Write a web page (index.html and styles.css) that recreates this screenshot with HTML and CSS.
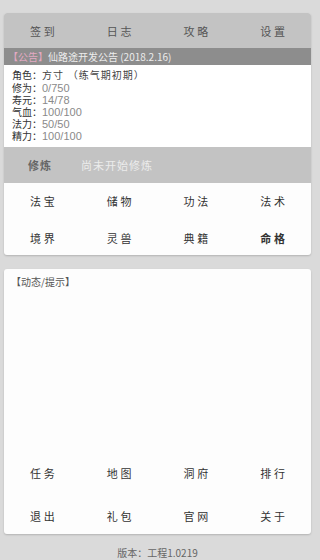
FILE: index.html
```html
<!DOCTYPE html>
<html lang="zh">
<head>
<meta charset="utf-8">
<link rel="stylesheet" href="styles.css">
</head>
<body>
<div class="page">
  <div class="card card-main">
    <div class="tabs">
      <div class="tab">签到</div>
      <div class="tab">日志</div>
      <div class="tab">攻略</div>
      <div class="tab">设置</div>
    </div>
    <div class="notice"><span class="notice-tag">【公告】</span>仙路途开发公告 (2018.2.16)</div>
    <div class="info">
      <div class="line"><span class="label">角色：</span><span class="dark">方寸 （练气期初期）</span></div>
      <div class="line"><span class="label">修为：</span><span class="val">0/750</span></div>
      <div class="line"><span class="label">寿元：</span><span class="val">14/78</span></div>
      <div class="line"><span class="label">气血：</span><span class="val">100/100</span></div>
      <div class="line"><span class="label">法力：</span><span class="val">50/50</span></div>
      <div class="line"><span class="label">精力：</span><span class="val">100/100</span></div>
    </div>
    <div class="train">
      <span class="train-btn">修炼</span>
      <span class="train-state">尚未开始修炼</span>
    </div>
    <div class="grid grid-top">
      <div class="cell">法宝</div>
      <div class="cell">储物</div>
      <div class="cell">功法</div>
      <div class="cell">法术</div>
      <div class="cell">境界</div>
      <div class="cell">灵兽</div>
      <div class="cell">典籍</div>
      <div class="cell strong">命格</div>
    </div>
  </div>
  <div class="card card-log">
    <div class="log-title">【动态/提示】</div>
    <div class="grid grid-bottom">
      <div class="cell">任务</div>
      <div class="cell">地图</div>
      <div class="cell">洞府</div>
      <div class="cell">排行</div>
      <div class="cell">退出</div>
      <div class="cell">礼包</div>
      <div class="cell">官网</div>
      <div class="cell">关于</div>
    </div>
  </div>
  <div class="version">版本：工程1.0219</div>
</div>
</body>
</html>
```
FILE: styles.css
```css
html, body {
  margin: 0;
  padding: 0;
  background: #dadada;
}
body {
  font-family: "Noto Sans CJK SC", "Noto Sans", sans-serif;
  color: #333;
}
.page {
  width: 315px;
  height: 560px;
  box-sizing: border-box;
  padding: 13px 4px 0 4px;
  display: flex;
  flex-direction: column;
}
.card {
  background: #fdfdfd;
  border-radius: 3px;
  box-shadow: 0 1px 2px rgba(0,0,0,0.18);
  overflow: hidden;
}
.tabs {
  height: 35px;
  background: #c3c3c3;
  display: grid;
  grid-template-columns: repeat(4, 1fr);
  align-items: center;
}
.tab {
  text-align: center;
  font-size: 11px;
  letter-spacing: 3px;
  text-indent: 3px;
  color: #555;
}
.notice {
  height: 17px;
  line-height: 17px;
  background: #8d8d8d;
  color: #ececec;
  font-size: 10px;
  padding-left: 4px;
  white-space: nowrap;
}
.notice-tag {
  color: #e3a9c3;
}
.info {
  height: 82px;
  box-sizing: border-box;
  padding: 5px 0 0 8px;
  background: #ffffff;
}
.line {
  font-family: "Liberation Sans", "Noto Sans CJK SC", sans-serif;
  font-size: 10px;
  line-height: 12px;
  height: 12px;
  white-space: nowrap;
}
.label {
  color: #333;
}
.dark {
  color: #444;
  letter-spacing: 1px;
}
.val {
  color: #8a8a8a;
  font-size: 11px;
}
.train {
  height: 36px;
  background: #c3c3c3;
  display: flex;
  align-items: center;
  padding-left: 24px;
  gap: 29px;
  font-size: 11px;
}
.train-btn {
  color: #666;
  font-weight: bold;
  letter-spacing: 1px;
}
.train-state {
  color: #ececec;
  letter-spacing: 1px;
}
.grid {
  display: grid;
  grid-template-columns: repeat(4, 1fr);
}
.grid-top {
  grid-auto-rows: 36.5px;
  align-items: center;
}
.cell {
  text-align: center;
  font-size: 11px;
  letter-spacing: 3px;
  text-indent: 3px;
  color: #333;
}
.cell.strong {
  font-weight: bold;
}
.card-log {
  margin-top: 14px;
  height: 266px;
  display: flex;
  flex-direction: column;
  justify-content: space-between;
}
.log-title {
  font-size: 10px;
  color: #555;
  padding: 5px 0 0 7px;
}
.grid-bottom {
  grid-template-rows: 43px 36px;
  row-gap: 4px;
  align-items: center;
}
.version {
  text-align: center;
  font-size: 10px;
  color: #666;
  margin-top: 11px;
}
```
